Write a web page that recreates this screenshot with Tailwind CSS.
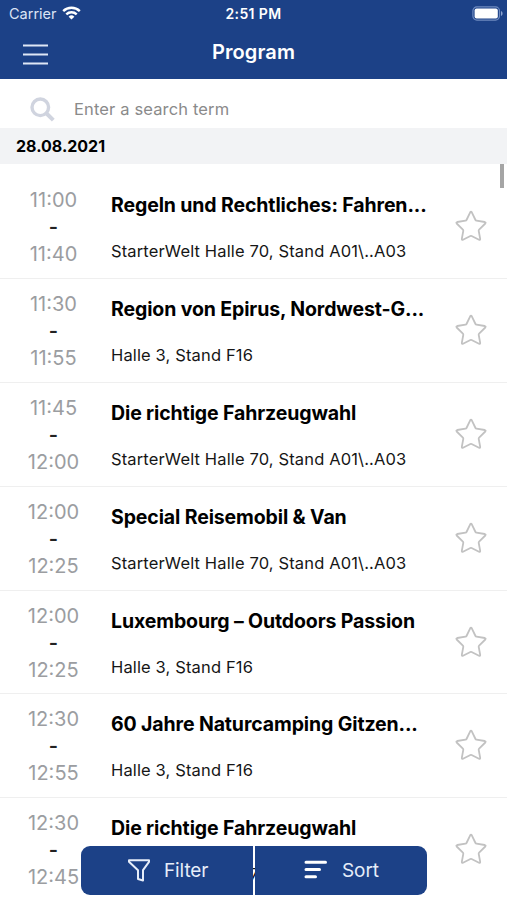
<!DOCTYPE html>
<html lang="en">
  <head>
    <meta charset="UTF-8" />
    <meta name="viewport" content="width=device-width, initial-scale=1.0" />
    <title>Program</title>
    <script src="https://cdn.jsdelivr.net/npm/@tailwindcss/browser@4"></script>
  </head>
  <body class="relative flex flex-col h-[900px] overflow-hidden bg-white text-black font-['Inter',sans-serif]">

    <!-- Header -->
    <header class="h-[79px] shrink-0 bg-[#1c4187] text-white">
      <!-- Status bar -->
      <div class="grid grid-cols-3 items-center h-[27px] pl-[9px] pr-[9px]">
        <div class="flex items-center gap-[5px] text-[14.5px] text-[#dbe4f5]">
          <span>Carrier</span>
          <svg class="w-[19px] h-[14px] -mt-[1px]" viewBox="0 0 19 14" fill="none" stroke="white" stroke-width="2.4">
            <path d="M1.2 5.2a11.8 11.8 0 0 1 16.6 0" />
            <path d="M4.3 8.4a7.4 7.4 0 0 1 10.4 0" />
            <path d="M9.5 13.6L6.6 10.7a4.1 4.1 0 0 1 5.8 0z" fill="white" stroke="none" />
          </svg>
        </div>
        <div class="text-center text-[14px] font-semibold tracking-[0.4px]">2:51 PM</div>
        <svg class="w-[31px] h-[15px] justify-self-end -mr-[5px]" viewBox="0 0 31 15" fill="none">
          <rect x="0.9" y="0.9" width="26.6" height="13.2" rx="4" stroke="#6f8bc0" stroke-width="1.2" />
          <rect x="2.6" y="2.6" width="23.2" height="9.8" rx="2" fill="white" />
          <path d="M29 5v5c1-.4 1.6-1.3 1.6-2.5S30 5.400 29 5z" fill="#8ca3cf" />
        </svg>
      </div>
      <!-- Title bar -->
      <div class="grid grid-cols-3 items-center h-[51px] px-[23px]">
        <svg class="w-[25px] h-[21px] mt-[3px]" viewBox="0 0 25 21" stroke="#dfe7f6" stroke-width="2">
          <path d="M0 1.500h25M0 10.500h25M0 19.500h25" />
        </svg>
        <h1 class="text-center text-[20px] font-semibold tracking-[0.1px] -mt-[2px]">Program</h1>
      </div>
    </header>

    <!-- Search -->
    <div class="flex items-center h-[49px] shrink-0 pl-[30px] pt-[12px] gap-[19px]">
      <svg class="w-[25px] h-[25px]" viewBox="0 0 25 25" fill="none" stroke="#d0d4df" stroke-width="3.400">
        <circle cx="10.300" cy="10.300" r="8.300" />
        <path d="M16.300 16.300l7 6.800" stroke-width="4" />
      </svg>
      <span class="text-[16.5px] tracking-[0.14px] text-[#8a8a8a]">Enter a search term</span>
    </div>

    <!-- Day -->
    <div class="flex items-center h-[36px] shrink-0 pl-[16px] bg-[#f2f3f5] text-[16px] font-bold">28.08.2021</div>

    <!-- Sessions -->
    <main id="sessionList" class="pt-[11.4px]"></main>

    <!-- Scrollbar -->
    <div class="absolute right-[3px] top-[164px] w-[4px] h-[24px] bg-[#a5a5a5]"></div>

    <!-- Filter / Sort -->
    <div class="absolute left-[81px] top-[846px] w-[346px] h-[49px] flex gap-[2px]">
      <button class="flex items-center w-[172px] rounded-l-[9px] bg-[#1c4187] text-white text-[19px] pl-[47px] gap-[14px]">
        <svg class="w-[22px] h-[23px]" viewBox="0 0 22 23" fill="none" stroke="#e6edf9" stroke-width="2" stroke-linejoin="round">
          <path d="M1 1.200h20v1.600l-6 8.400v10.300l-5-1.500v-8.800L1 2.800z" />
        </svg>
        <span class="text-[#e6edf9] tracking-[-0.1px] pt-[2px]">Filter</span>
      </button>
      <button class="flex items-center w-[172px] rounded-r-[9px] bg-[#1c4187] text-white text-[19px] pl-[49px] gap-[15px]">
        <svg class="w-[23px] h-[19px] -mt-[2px]" viewBox="0 0 23 19" stroke="white" stroke-width="3" stroke-linecap="round">
          <path d="M2 2.200h19.500M2 9.500h13.500M2 16.800h9.500" />
        </svg>
        <span class="text-[#e6edf9] tracking-[-0.1px] pt-[2px]">Sort</span>
      </button>
    </div>

    <script>
      const sessions = [
        { start: '11:00', end: '11:40', title: 'Regeln und Rechtliches: Fahren...', place: 'StarterWelt Halle 70, Stand A01\\..A03' },
        { start: '11:30', end: '11:55', title: 'Region von Epirus, Nordwest-G...', place: 'Halle 3, Stand F16' },
        { start: '11:45', end: '12:00', title: 'Die richtige Fahrzeugwahl', place: 'StarterWelt Halle 70, Stand A01\\..A03' },
        { start: '12:00', end: '12:25', title: 'Special Reisemobil &amp; Van', place: 'StarterWelt Halle 70, Stand A01\\..A03' },
        { start: '12:00', end: '12:25', title: 'Luxembourg – Outdoors Passion', place: 'Halle 3, Stand F16' },
        { start: '12:30', end: '12:55', title: '60 Jahre Naturcamping Gitzen...', place: 'Halle 3, Stand F16' },
        { start: '12:30', end: '12:45', title: 'Die richtige Fahrzeugwahl', place: 'StarterWelt Halle 70, Stand A01\\..A03' },
      ];

      document.getElementById('sessionList').innerHTML = sessions.map(row => `
        <div class="flex h-[103.8px] border-b border-[#efefef]">
          <div class="w-[107px] shrink-0 pt-[12px] text-center text-[20px] leading-[27px] text-[#9b9da1]">
            <div>${row.start}</div>
            <div class="font-semibold text-[#222222]">-</div>
            <div>${row.end}</div>
          </div>
          <div class="flex-1 pl-[4px] pt-[15px] whitespace-nowrap">
            <h2 class="text-[19.5px] leading-[30px] font-bold tracking-[-0.12px]">${row.title}</h2>
            <p class="mt-[18px] text-[16.5px] leading-[26px] tracking-[0.14px] text-[#161616]">${row.place}</p>
          </div>
          <svg class="w-[32px] h-[32px] shrink-0 mt-[35px] mr-[20px]" viewBox="0 0 32 32" fill="none" stroke="#c2c2c2" stroke-width="1.800" stroke-linejoin="round">
            <path d="M15.200 2.300q.8-1.300 1.600 0l3.700 7.700q.3.600 1 .7l8.300 1.300q1.400.4.500 1.500l-6.200 6.100q-.5.500-.4 1.200l1.500 8q.1 1.400-1.200.9L16.600 26q-.6-.3-1.200 0L8 29.700q-1.300.5-1.200-.9l1.500-8q.1-.7-.4-1.200l-6.200-6.100q-.9-1.100.5-1.500l8.300-1.300q.7-.1 1-.7z" />
          </svg>
        </div>`).join('');
    </script>
  </body>
</html>
